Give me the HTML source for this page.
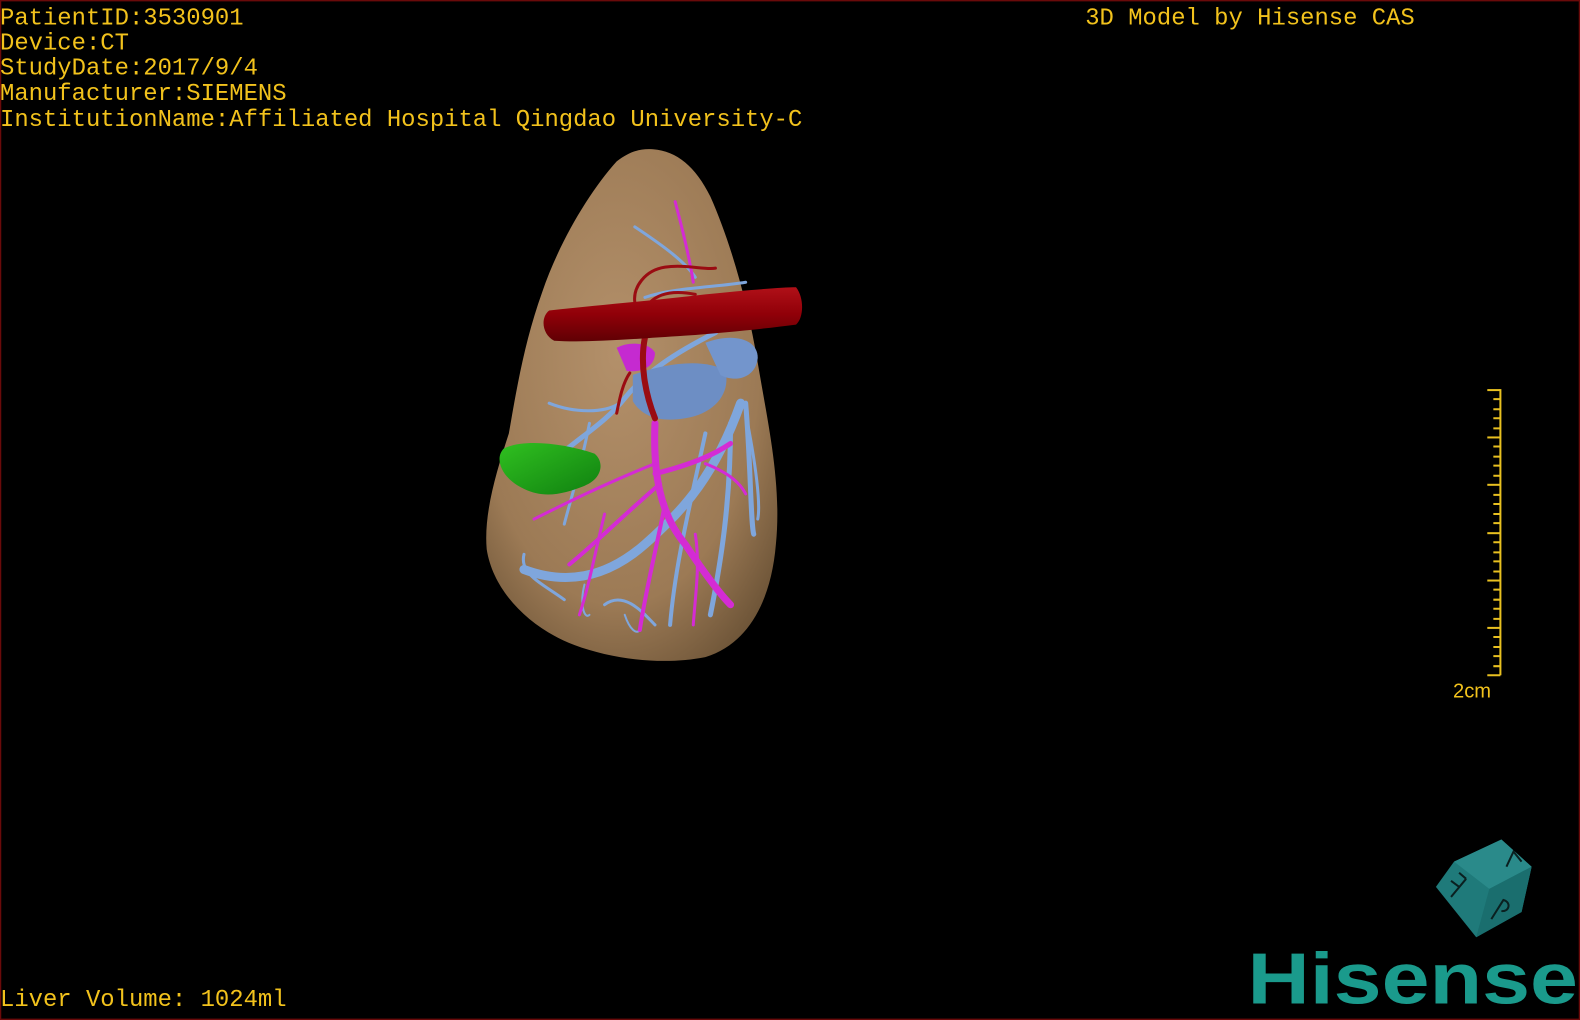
<!DOCTYPE html>
<html><head><meta charset="utf-8"><style>
html,body{margin:0;padding:0;background:#000;width:1580px;height:1020px;overflow:hidden}
svg{display:block}
text{font-family:"Liberation Mono",monospace;fill:#f2c21c;font-size:23.7px}
</style></head><body>
<svg width="1580" height="1020" viewBox="0 0 1568 1012" xmlns="http://www.w3.org/2000/svg">
<defs>
<radialGradient id="lv" cx="0.45" cy="0.4" r="0.7">
<stop offset="0" stop-color="#b3906a"/><stop offset="0.7" stop-color="#9c7a55"/><stop offset="1" stop-color="#6e5538"/>
</radialGradient>
<linearGradient id="red" x1="0" y1="0" x2="0" y2="1"><stop offset="0" stop-color="#b01018"/><stop offset="0.5" stop-color="#900008"/><stop offset="1" stop-color="#600004"/></linearGradient>
<linearGradient id="gr" x1="0" y1="0" x2="1" y2="1"><stop offset="0" stop-color="#30c020"/><stop offset="1" stop-color="#108010"/></linearGradient>
</defs>
<rect x="0.5" y="0.5" width="1567" height="1011" fill="#000" stroke="#6a0a0a" stroke-width="1.5"/>
<path d="M648,148 C672,150 690,165 705,195 C725,240 742,300 752,360 C762,420 776,480 770,540 C765,600 740,640 700,652 C660,660 610,655 570,640 C530,625 490,590 483,545 C480,510 492,470 505,430 C512,390 520,340 538,290 C555,240 585,190 612,160 C625,150 636,147 648,148 Z" fill="url(#lv)"/>
<g stroke="#7fa6dc" fill="none" stroke-linecap="round">
<path d="M520,565 C560,580 600,575 640,540 C680,505 710,470 735,400" stroke-width="9"/>
<path d="M740,400 C745,460 745,520 748,530" stroke-width="5"/>
<path d="M725,420 C725,500 715,560 705,610" stroke-width="5"/>
<path d="M700,430 C685,500 670,560 665,620" stroke-width="4"/>
<path d="M600,600 C620,585 640,610 650,620" stroke-width="3"/>
<path d="M545,460 C580,430 600,420 620,395 C640,370 670,350 710,330" stroke-width="5"/>
<path d="M545,400 C570,410 600,410 615,400" stroke-width="3"/>
<path d="M585,420 C575,470 565,500 560,520" stroke-width="3"/>
<path d="M630,225 C660,245 680,260 690,275" stroke-width="3"/>
<path d="M640,295 C670,285 710,285 740,280" stroke-width="3"/>
<path d="M520,550 C515,570 540,580 560,595" stroke-width="3"/>
<path d="M580,580 C575,600 580,615 585,610" stroke-width="2"/>
<path d="M620,610 C625,625 632,630 635,625" stroke-width="2"/>
<path d="M740,410 C750,460 755,500 752,515" stroke-width="3"/>
</g>
<path d="M628,372 C660,360 700,355 720,368 C725,390 710,410 680,415 C650,420 635,410 628,398 Z" fill="#6d8ec4"/>
<path d="M700,340 C725,330 752,335 752,355 C750,375 730,380 715,372 Z" fill="#7395cc"/>
<g stroke="#d42bd4" fill="none" stroke-linecap="round">
<path d="M650,420 C648,470 655,510 680,540 C700,570 715,590 725,600" stroke-width="7"/>
<path d="M650,470 C690,460 710,450 725,440" stroke-width="5"/>
<path d="M655,480 C620,510 590,540 565,560" stroke-width="4"/>
<path d="M650,460 C600,480 560,500 530,515" stroke-width="3"/>
<path d="M660,500 C650,550 640,590 635,625" stroke-width="4"/>
<path d="M690,530 C695,560 690,590 688,620" stroke-width="3"/>
<path d="M670,200 C678,230 685,260 688,280" stroke-width="3"/>
<path d="M600,510 C590,550 585,580 575,610" stroke-width="3"/>
<path d="M700,460 C725,470 735,480 740,490" stroke-width="3"/>
</g>
<path d="M612,345 C625,338 645,340 650,350 C650,362 640,370 622,368 Z" fill="#c52ad0"/>
<g stroke="#9a0c12" fill="none" stroke-linecap="round">
<path d="M640,335 C635,360 640,390 650,415" stroke-width="6"/>
<path d="M630,300 C628,285 640,268 660,265 C680,262 700,268 710,266" stroke-width="3"/>
<path d="M625,370 C618,380 615,395 612,410" stroke-width="3"/>
<path d="M645,300 C655,290 670,288 690,292" stroke-width="3"/>
</g>
<path d="M545,308 C600,302 650,298 700,292 C740,288 775,285 790,285 C798,295 798,315 790,322 C760,326 720,330 680,333 C620,337 580,340 550,338 C538,332 536,315 545,308 Z" fill="url(#red)"/>
<path d="M500,445 C520,435 560,440 590,450 C600,458 598,475 580,482 C560,490 540,495 520,485 C498,475 490,455 500,445 Z" fill="url(#gr)"/>
<text x="0" y="24">PatientID:3530901</text>
<text x="0" y="49">Device:CT</text>
<text x="0" y="74">StudyDate:2017/9/4</text>
<text x="0" y="99">Manufacturer:SIEMENS</text>
<text x="0" y="125">InstitutionName:Affiliated Hospital Qingdao University-C</text>
<text x="1077" y="24">3D Model by Hisense CAS</text>
<text x="0" y="998">Liver Volume: 1024ml</text>
<g stroke="#e8c020" stroke-width="2">
<line x1="1489" y1="386" x2="1489" y2="670"/>
<line x1="1476" y1="387" x2="1489" y2="387"/>
<line x1="1476" y1="434" x2="1489" y2="434"/>
<line x1="1476" y1="481" x2="1489" y2="481"/>
<line x1="1476" y1="529" x2="1489" y2="529"/>
<line x1="1476" y1="576" x2="1489" y2="576"/>
<line x1="1476" y1="623" x2="1489" y2="623"/>
<line x1="1476" y1="670" x2="1489" y2="670"/>
<path d="M1482,396H1489M1482,406H1489M1482,415H1489M1482,425H1489M1482,443H1489M1482,453H1489M1482,462H1489M1482,472H1489M1482,491H1489M1482,500H1489M1482,510H1489M1482,519H1489M1482,538H1489M1482,548H1489M1482,557H1489M1482,567H1489M1482,585H1489M1482,595H1489M1482,604H1489M1482,614H1489M1482,632H1489M1482,642H1489M1482,651H1489M1482,661H1489"/>
</g>
<text x="1442" y="692" style="font-family:'Liberation Sans',sans-serif;font-size:20px">2cm</text>
<g>
<path d="M1443,855 L1490,833 L1520,860 L1510,905 L1465,930 L1425,880 Z" fill="#1f7a7a"/>
<path d="M1443,855 L1490,833 L1520,860 L1478,882 Z" fill="#2a8a8a"/>
<path d="M1478,882 L1520,860 L1510,905 L1465,930 Z" fill="#1a6e6e"/>
<g stroke="#0a2020" stroke-width="2" fill="none">
<path d="M1440,890 L1455,872 M1448,880 L1440,874 M1455,872 L1448,866"/>
<path d="M1495,860 L1502,845 L1510,855"/>
<path d="M1480,912 L1492,893 C1500,895 1498,905 1490,904"/>
</g>
</g>
<text x="1238" y="996" style="font-family:'Liberation Sans',sans-serif;font-weight:bold;font-size:72px;fill:#1a9a8c" textLength="328" lengthAdjust="spacingAndGlyphs">Hisense</text>
</svg>
</body></html>
